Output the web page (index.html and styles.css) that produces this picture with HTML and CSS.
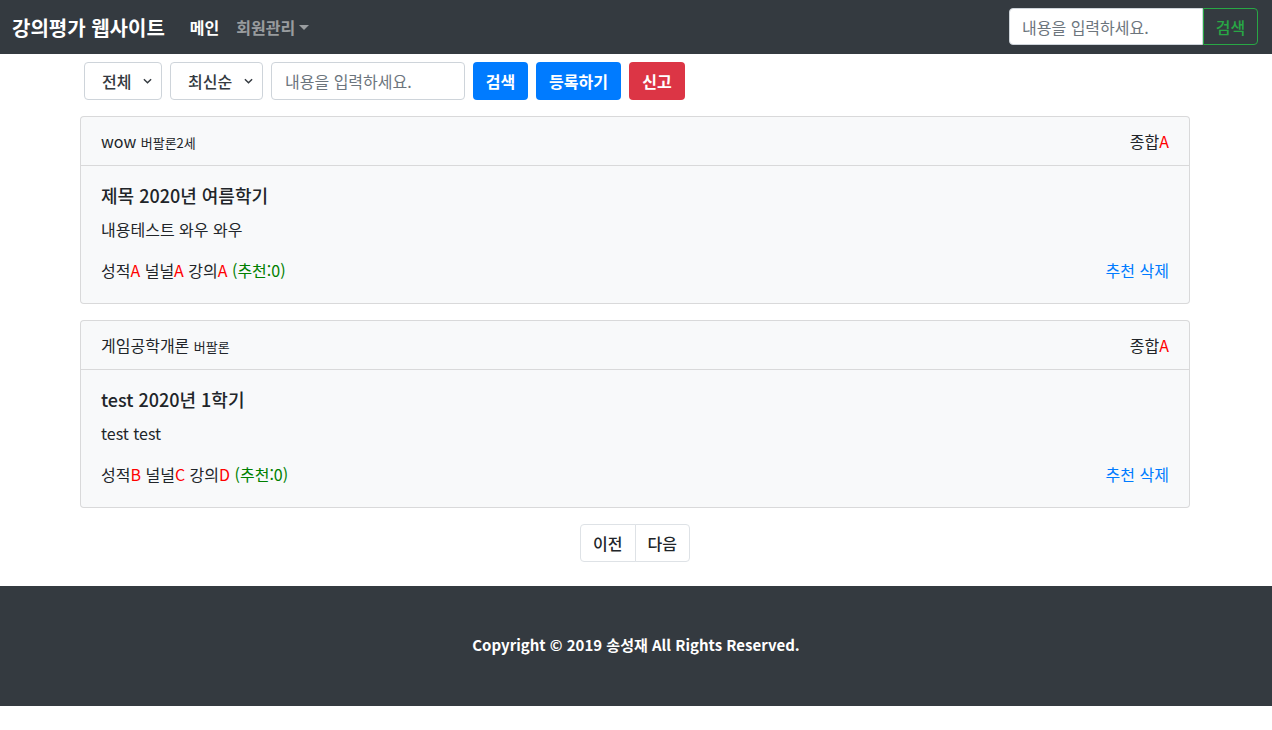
FILE: index.html
```html
<!DOCTYPE html>
<html lang="ko">
<head>
<meta charset="utf-8">
<title>강의평가 웹사이트</title>
<link rel="stylesheet" href="styles.css">
</head>
<body>
<nav class="navbar">
  <a class="brand" href="#">강의평가 웹사이트</a>
  <ul class="nav">
    <li><a class="nav-link active" href="#">메인</a></li>
    <li><a class="nav-link dropdown" href="#">회원관리<span class="caret"></span></a></li>
  </ul>
  <form class="nav-search">
    <input class="nav-input" type="text" placeholder="내용을 입력하세요.">
    <button class="btn-outline-success" type="button">검색</button>
  </form>
</nav>

<main class="container">
  <form class="search-bar">
    <div class="select sel-all">전체<svg class="chev" viewBox="0 0 10 6"><path d="M1 1l4 4 4-4" fill="none" stroke="#343a40" stroke-width="1.6"/></svg></div>
    <div class="select sel-new">최신순<svg class="chev" viewBox="0 0 10 6"><path d="M1 1l4 4 4-4" fill="none" stroke="#343a40" stroke-width="1.6"/></svg></div>
    <input class="search-input" type="text" placeholder="내용을 입력하세요.">
    <button class="btn btn-primary b-search" type="button">검색</button>
    <button class="btn btn-primary b-reg" type="button">등록하기</button>
    <button class="btn btn-danger b-rep" type="button">신고</button>
  </form>

  <div class="card">
    <div class="card-header">
      <div class="lec">wow <small>버팔론2세</small></div>
      <div class="total">종합<span class="red">A</span></div>
    </div>
    <div class="card-body">
      <h5 class="card-title">제목 2020년 여름학기</h5>
      <p class="card-text">내용테스트 와우 와우</p>
      <div class="card-row">
        <div>성적<span class="red">A</span> 널널<span class="red">A</span> 강의<span class="red">A</span> <span class="green">(추천:0)</span></div>
        <div class="actions"><a href="#">추천</a> <a href="#">삭제</a></div>
      </div>
    </div>
  </div>

  <div class="card">
    <div class="card-header">
      <div class="lec">게임공학개론 <small>버팔론</small></div>
      <div class="total">종합<span class="red">A</span></div>
    </div>
    <div class="card-body">
      <h5 class="card-title">test 2020년 1학기</h5>
      <p class="card-text">test test</p>
      <div class="card-row">
        <div>성적<span class="red">B</span> 널널<span class="red">C</span> 강의<span class="red">D</span> <span class="green">(추천:0)</span></div>
        <div class="actions"><a href="#">추천</a> <a href="#">삭제</a></div>
      </div>
    </div>
  </div>

  <ul class="pagination">
    <li><a href="#">이전</a></li>
    <li><a href="#">다음</a></li>
  </ul>
</main>

<footer class="footer">Copyright © 2019 송성재 All Rights Reserved.</footer>
</body>
</html>
```
FILE: styles.css
```css
* { box-sizing: border-box; }
html, body { margin: 0; }
body {
  font-family: "Noto Sans CJK KR", "Noto Sans", sans-serif;
  font-size: 16px;
  color: #212529;
  background: #fff;
}
a { text-decoration: none; }

.navbar {
  height: 54px;
  background: #343a40;
  display: flex;
  align-items: center;
  padding: 0 14px 0 12px;
}
.brand {
  color: #fff;
  font-size: 20px;
  font-weight: 700;
  margin-right: 25px;
}
.nav { list-style: none; margin: 0; padding: 0; display: flex; gap: 17px; flex: 1; }
.nav-link { font-size: 16px; font-weight: 700; color: rgba(255,255,255,.5); display: flex; align-items: center; }
.nav-link.active { color: #fff; }
.caret {
  display: inline-block;
  margin-left: 4px;
  border-top: 5px solid rgba(255,255,255,.5);
  border-left: 5px solid transparent;
  border-right: 5px solid transparent;
}
.nav-search { display: flex; margin-top: -1px; }
.nav-input {
  width: 194px; height: 37px;
  border: 1px solid #ced4da;
  border-radius: 4px 0 0 4px;
  padding: 0 12px;
  font: inherit; font-size: 16px;
}
.nav-input::placeholder, .search-input::placeholder { color: #6c757d; }
.btn-outline-success {
  width: 55px; height: 37px;
  background: transparent;
  border: 1px solid #28a745;
  color: #28a745;
  border-radius: 0 4px 4px 0;
  font: inherit; font-size: 16px; font-weight: 500;
  padding: 0;
}

.container { width: 1110px; margin-left: calc(50% - 556px); }
.search-bar {
  display: flex;
  gap: 8px;
  padding: 8px 0 0 4px;
  margin-bottom: 16px;
}
.select {
  height: 38px;
  border: 1px solid #ced4da;
  border-radius: 4px;
  display: flex;
  align-items: center;
  justify-content: space-between;
  padding: 0 9px 0 17px;
  font-size: 16px;
  font-weight: 500;
  color: #343a40;
}
.sel-all { width: 78px; }
.sel-new { width: 93px; }
.chev { width: 9px; height: 6px; }
.search-input {
  width: 194px; height: 38px;
  border: 1px solid #ced4da;
  border-radius: 4px;
  padding: 0 13px;
  font: inherit; font-size: 16px;
}
.btn {
  height: 38px;
  border: none;
  border-radius: 4px;
  color: #fff;
  font: inherit; font-size: 16px; font-weight: 700;
  padding: 0;
}
.b-search { width: 55px; }
.b-reg { width: 85px; }
.b-rep { width: 56px; }
.btn-primary { background: #007bff; }
.btn-danger { background: #dc3545; }

.card {
  border: 1px solid rgba(0,0,0,.125);
  border-radius: 4px;
  background: #f8f9fa;
  margin-bottom: 16px;
}
.card-header {
  height: 49px;
  display: flex;
  justify-content: space-between;
  align-items: center;
  padding: 0 20px;
  border-bottom: 1px solid rgba(0,0,0,.125);
  font-size: 16px;
}
.card-header small { font-size: 13px; }
.card-body { padding: 17px 20px 21px; }
.card-title { font-size: 18px; font-weight: 500; margin: 0 0 10px; line-height: 24px; }
.card-text { margin: 0 0 17px; line-height: 24px; }
.card-row { display: flex; justify-content: space-between; line-height: 24px; }
.actions a { color: #007bff; }
.red { color: #f00; }
.green { color: #008000; }

.pagination {
  list-style: none;
  display: flex;
  justify-content: center;
  margin: 0 0 24px;
  padding: 0;
}
.pagination li a {
  display: block;
  height: 38px;
  line-height: 36px;
  padding: 0 12px;
  border: 1px solid #dee2e6;
  color: #212529;
  font-weight: 500;
}
.pagination li:first-child a { border-radius: 4px 0 0 4px; }
.pagination li + li a { margin-left: -1px; border-radius: 0 4px 4px 0; }

.footer {
  height: 120px;
  background: #343a40;
  color: #fff;
  font-weight: 700;
  font-size: 15px;
  display: flex;
  align-items: center;
  justify-content: center;
  padding-bottom: 4px;
}
```
